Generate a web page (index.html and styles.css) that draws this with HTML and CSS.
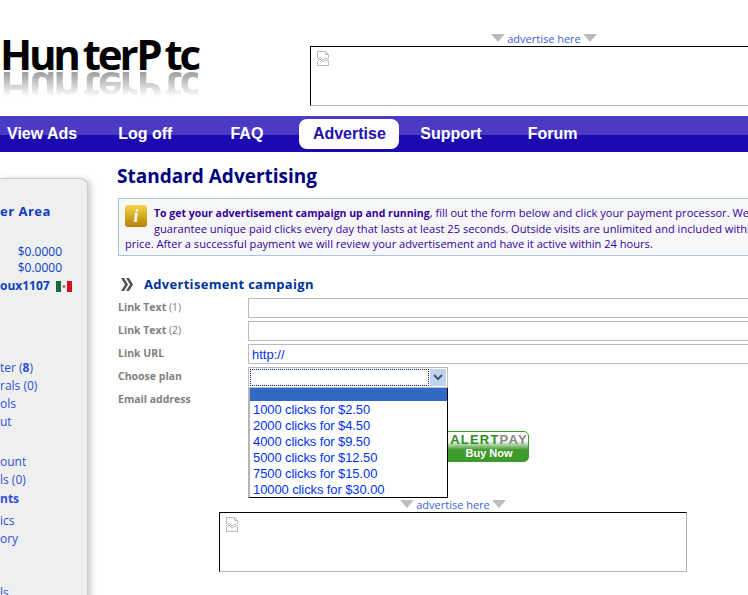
FILE: index.html
```html
<!DOCTYPE html>
<html lang="en">
<head>
<meta charset="UTF-8">
<title>HunterPtc - Standard Advertising</title>
<link rel="stylesheet" href="styles.css">
</head>
<body>
<div class="header">
  <div class="logo">
    <div class="logo-text">Hun<span class="gap-a">ter</span><span class="gap-b">P</span><span class="gap-c">tc</span></div>
    <div class="logo-text logo-reflect" aria-hidden="true">Hun<span class="gap-a">ter</span><span class="gap-b">P</span><span class="gap-c">tc</span></div>
  </div>
  <div class="ad ad-top">
    <div class="ad-label"><i class="tri"></i><a href="#">advertise here</a><i class="tri"></i></div>
    <div class="ad-box">
      <svg class="broken" width="16" height="15" viewBox="0 0 16 15"><path d="M1.500 7V.5h8l3 3V7M1.500 10v4.500h11V10M9.500.5v3h3" fill="none" stroke="#bbb"/><path d="M1 9l3-3 3 3 3-2 3 2M1 11l3-3 3 3 3-2 3 2" fill="none" stroke="#bbb"/></svg>
    </div>
  </div>
</div>

<div class="nav">
  <a href="#" class="nav-item nav-viewads">View Ads</a>
  <a href="#" class="nav-item nav-logoff">Log off</a>
  <a href="#" class="nav-item nav-faq">FAQ</a>
  <a href="#" class="nav-item nav-active">Advertise</a>
  <a href="#" class="nav-item nav-support">Support</a>
  <a href="#" class="nav-item nav-forum">Forum</a>
</div>

<div class="page">
  <div class="sidebar">
    <div class="side-title">er Area</div>
    <div class="side-money">$0.0000</div>
    <div class="side-money">$0.0000</div>
    <div class="side-user">oux1107
      <svg class="flag" width="16" height="11" viewBox="0 0 16 11"><rect width="16" height="11" fill="#eee"/><rect width="5" height="11" fill="#1a6b3c"/><rect x="11" width="5" height="11" fill="#d01020"/><circle cx="8" cy="5.500" r="1.600" fill="#998866"/></svg>
    </div>
    <div class="side-group">
      <div class="side-link">ter (<b>8</b>)</div>
      <div class="side-link">rals (0)</div>
      <div class="side-link">ols</div>
      <div class="side-link">ut</div>
    </div>
    <div class="side-group side-group2">
      <div class="side-link">ount</div>
      <div class="side-link">ls (0)</div>
      <div class="side-link side-bold">nts</div>
    </div>
    <div class="side-group side-group3">
      <div class="side-link">ics</div>
      <div class="side-link">ory</div>
    </div>
    <div class="side-link side-last">ls</div>
  </div>

  <div class="main">
    <h1>Standard Advertising</h1>
    <div class="info">
      <div class="info-icon">i</div>
      <b>To get your advertisement campaign up and running</b>, fill out the form below and click your payment processor. We<br>
      guarantee unique paid clicks every day that lasts at least 25 seconds. Outside visits are unlimited and included within<br>
      price. After a successful payment we will review your advertisement and have it active within 24 hours.
    </div>

    <h2>
      <svg width="14" height="13" viewBox="0 0 14 13"><path d="M1 0h3l4 6.500-4 6.500H1l4-6.500zM6 0h3l4 6.500-4 6.500H6l4-6.500z" fill="#555"/></svg>
      Advertisement campaign
    </h2>

    <div class="form">
      <div class="row"><label>Link Text <span>(1)</span></label><input type="text"></div>
      <div class="row"><label>Link Text <span>(2)</span></label><input type="text"></div>
      <div class="row"><label>Link URL</label><input type="text" value="http://"></div>
      <div class="row">
        <label>Choose plan</label>
        <div class="select">
          <div class="select-value"></div>
          <div class="select-arrow"><svg width="10" height="7" viewBox="0 0 10 7"><path d="M1 1l4 4 4-4" fill="none" stroke="#44557a" stroke-width="2"/></svg></div>
          <div class="select-list">
            <div class="opt opt-blank"></div>
            <div class="opt">1000 clicks for $2.50</div>
            <div class="opt">2000 clicks for $4.50</div>
            <div class="opt">4000 clicks for $9.50</div>
            <div class="opt">5000 clicks for $12.50</div>
            <div class="opt">7500 clicks for $15.00</div>
            <div class="opt">10000 clicks for $30.00</div>
          </div>
        </div>
      </div>
      <div class="row"><label>Email address</label></div>
    </div>

    <div class="alertpay">
      <div class="alertpay-name">ALERT<span>PAY</span></div>
      <div class="alertpay-buy">Buy Now</div>
    </div>

    <div class="ad ad-bottom">
      <div class="ad-label"><i class="tri"></i><a href="#">advertise here</a><i class="tri"></i></div>
      <div class="ad-box">
        <svg class="broken" width="16" height="15" viewBox="0 0 16 15"><path d="M1.500 7V.5h8l3 3V7M1.500 10v4.500h11V10M9.500.5v3h3" fill="none" stroke="#bbb"/><path d="M1 9l3-3 3 3 3-2 3 2M1 11l3-3 3 3 3-2 3 2" fill="none" stroke="#bbb"/></svg>
      </div>
    </div>
  </div>
</div>
</body>
</html>
```

FILE: styles.css
```css
html, body {
  margin: 0;
  width: 748px;
  height: 595px;
  overflow: hidden;
  background: #fff;
  font-family: "Open Sans", sans-serif;
}

a {
  text-decoration: none;
}

/* header */
.header {
  display: flex;
  height: 116px;
}

.logo {
  position: relative;
  width: 310px;
  flex: none;
}

.logo-text {
  font-family: "Open Sans", sans-serif;
  font-weight: 700;
  font-size: 42px;
  line-height: 34px;
  letter-spacing: -3.200px;
  color: #000;
  padding: 37px 0 0 0;
  white-space: nowrap;
}

.gap-a {
  margin-left: 5px;
}

.gap-b {
  margin-left: 1px;
}

.gap-c {
  margin-left: 5px;
}

.logo-reflect {
  position: absolute;
  left: 0;
  top: 71px;
  padding: 0;
  transform: scaleY(-1);
  opacity: 0.4;
  -webkit-mask-image: linear-gradient(to top, #000 0, transparent 76%);
  mask-image: linear-gradient(to top, #000 0, transparent 76%);
}

.ad {
  flex: none;
  width: 468px;
}

.ad-top {
  padding-top: 32px;
}

.ad-label {
  box-sizing: border-box;
  display: flex;
  justify-content: center;
  align-items: center;
  gap: 2px;
  height: 14px;
  padding-bottom: 2px;
  font-size: 11px;
}

.ad-label a {
  color: #3f5fe0;
}

.tri {
  width: 0;
  height: 0;
  border-left: 7px solid transparent;
  border-right: 7px solid transparent;
  border-top: 8px solid #bdbdbd;
}

.ad-box {
  box-sizing: border-box;
  width: 468px;
  height: 60px;
  border-top: 1px solid #000;
  border-left: 1px solid #000;
  border-right: 1px solid #b5b5b5;
  border-bottom: 1px solid #b5b5b5;
  padding: 4px 0 0 5px;
}

.broken {
  display: block;
}

/* nav */
.nav {
  display: flex;
  align-items: center;
  height: 36px;
  background: linear-gradient(to bottom, #4b3bc4 0, #4b3bc4 19px, #1c0ab0 19px, #1c0ab0 100%);
  font-family: "Liberation Sans", Arial, sans-serif;
  font-size: 16px;
  font-weight: bold;
}

.nav-item {
  color: #fff;
  white-space: nowrap;
}

.nav-viewads {
  margin-left: 7px;
}

.nav-logoff {
  margin-left: 41px;
}

.nav-faq {
  margin-left: 58px;
}

.nav-active {
  margin-left: 36px;
  width: 100px;
  height: 30px;
  line-height: 30px;
  text-align: center;
  background: #fff;
  color: #2010b0;
  border-radius: 8px;
}

.nav-support {
  margin-left: 21px;
}

.nav-forum {
  margin-left: 46px;
}

/* page columns */
.page {
  display: flex;
}

.sidebar {
  box-sizing: border-box;
  flex: none;
  width: 88px;
  height: 460px;
  margin-top: 26px;
  padding-top: 23px;
  background: #efefef;
  border: 1px solid #ccc;
  border-left: none;
  border-radius: 0 8px 0 0;
  box-shadow: 3px 1px 6px rgba(0, 0, 0, 0.2);
  color: #2b4fd8;
  font-size: 12px;
  line-height: 18px;
  white-space: nowrap;
}

.side-title {
  font-weight: bold;
  font-size: 13px;
  letter-spacing: 0.500px;
  color: #0b3fc0;
  height: 42px;
}

.side-money {
  width: 62px;
  text-align: right;
  height: 16px;
  line-height: 16px;
  font-size: 12px;
  color: #0b3fc0;
}

.side-user {
  margin-top: 0;
  display: flex;
  align-items: center;
  gap: 6px;
  font-weight: bold;
  font-size: 12px;
  color: #0b3fc0;
  height: 20px;
}

.side-group {
  margin-top: 63px;
}

.side-group2 {
  margin-top: 22px;
}

.side-group3 {
  margin-top: 4px;
}

.side-bold {
  margin-top: 1px;
  font-weight: bold;
}

.side-last {
  margin-top: 36px;
}

/* main */
.main {
  margin-left: 29px;
  flex: none;
  width: 640px;
}

h1 {
  margin: 12px 0 0;
  height: 24px;
  font-size: 19px;
  line-height: 24px;
  font-weight: bold;
  color: #000080;
  white-space: nowrap;
}

.info {
  box-sizing: border-box;
  width: 660px;
  height: 58px;
  margin: 10px 0 0 1px;
  padding: 6px;
  background: #f7f7f9;
  border: 1px solid #aac4e0;
  color: #330099;
  font-size: 11.100px;
  line-height: 15px;
  white-space: nowrap;
}

.info b {
  font-size: 10.500px;
}

.info-icon {
  float: left;
  width: 22px;
  height: 22px;
  margin-right: 7px;
  border-radius: 3px;
  background: linear-gradient(to bottom, #f5d64a, #b57f00);
  color: #fff;
  font-family: "Liberation Serif", serif;
  font-style: italic;
  font-weight: bold;
  font-size: 18px;
  line-height: 22px;
  text-align: center;
}

h2 {
  display: flex;
  align-items: center;
  gap: 10px;
  margin: 19px 0 0 3px;
  height: 18px;
  font-size: 13px;
  font-weight: bold;
  letter-spacing: 0.300px;
  color: #003399;
  white-space: nowrap;
}

.form {
  margin: 5px 0 0 1px;
}

.row {
  display: flex;
  height: 23px;
}

.row label {
  flex: none;
  width: 130px;
  font-size: 10.500px;
  font-weight: bold;
  line-height: 18px;
  color: #808080;
}

.row label span {
  font-weight: normal;
}

.row input {
  box-sizing: border-box;
  flex: none;
  width: 520px;
  height: 20px;
  padding: 0 3px;
  border: 1px solid #bbb;
  font-family: "Liberation Sans", Arial, sans-serif;
  font-size: 13px;
  color: #0033ee;
  outline: none;
}

.select {
  position: relative;
  box-sizing: border-box;
  display: flex;
  width: 200px;
  height: 21px;
  padding: 1px;
  border: 1px solid #bbb;
}

.select-value {
  flex: 1;
  border: 1px dotted #002090;
}

.select-arrow {
  display: flex;
  align-items: center;
  justify-content: center;
  width: 16px;
  margin-left: 1px;
  background: #c1d2ee;
}

.select-list {
  position: absolute;
  left: -1px;
  top: 20px;
  box-sizing: border-box;
  width: 200px;
  height: 110px;
  background: #fff;
  border: 1px solid #000;
  border-left: 2px solid #b5b5b5;
  border-top: none;
}

.opt {
  height: 16px;
  padding-left: 3px;
  font-family: "Liberation Sans", Arial, sans-serif;
  font-size: 13px;
  line-height: 18px;
  letter-spacing: -0.100px;
  color: #0033ee;
  white-space: nowrap;
}

.opt-blank {
  height: 13px;
  background: #316ac5;
}

.alertpay {
  box-sizing: border-box;
  width: 89px;
  height: 31px;
  margin: 18px 0 0 323px;
  padding-left: 9px;
  border-radius: 5px;
  border: 1px solid #3f9a2c;
  background: linear-gradient(to bottom, #fff 0, #fff 30%, #3f9a2c 62%, #3f9a2c 100%);
  font-family: "Liberation Sans", Arial, sans-serif;
  text-align: center;
}

.alertpay-name {
  font-size: 13px;
  line-height: 15px;
  font-weight: bold;
  letter-spacing: 1.200px;
  color: #2f8a22;
}

.alertpay-name span {
  color: #888;
}

.alertpay-buy {
  font-size: 11px;
  line-height: 13px;
  font-weight: bold;
  color: #fff;
}

.ad-bottom {
  margin: 36px 0 0 102px;
}
```
